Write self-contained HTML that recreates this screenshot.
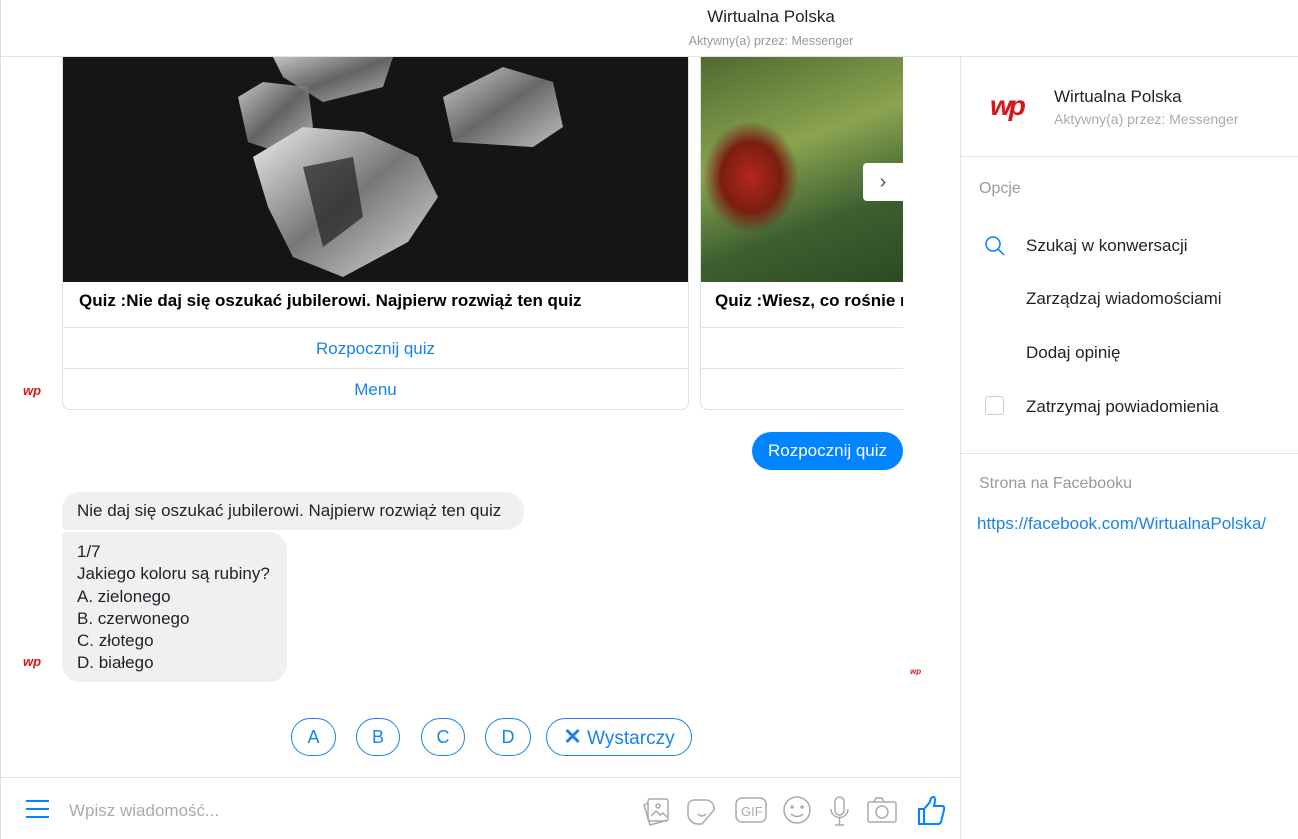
<!DOCTYPE html>
<html><head><meta charset="utf-8"><style>
*{box-sizing:border-box;margin:0;padding:0}
body{width:1298px;height:839px;overflow:hidden;background:#fff;font-family:"Liberation Sans",sans-serif;position:relative;color:#1d2129}
.abs{position:absolute}
</style></head><body>
<div class="abs" style="left:0;top:0;width:1298px;height:57px;border-bottom:1px solid #e4e4e4"></div>
<div class="abs" style="left:0;top:0;width:1px;height:839px;background:#ddd"></div>
<div class="abs" style="left:560px;top:7px;width:422px;text-align:center;font-size:17px">Wirtualna Polska</div>
<div class="abs" style="left:560px;top:34px;width:422px;text-align:center;font-size:12.5px;color:#999">Aktywny(a) przez: Messenger</div>
<div class="abs" style="left:960px;top:57px;width:1px;height:782px;background:#e4e4e4"></div>

<!-- card 1 -->
<div class="abs" style="left:62px;top:57px;width:627px;height:353px;border:1px solid #e0e0e0;border-top:none;border-radius:0 0 8px 8px;overflow:hidden">
 <svg width="627" height="225" style="display:block;background:#151515">
  <defs><linearGradient id="g" x1="0" y1="0" x2="1" y2="1"><stop offset="0" stop-color="#eee"/><stop offset=".5" stop-color="#777"/><stop offset="1" stop-color="#ddd"/></linearGradient></defs>
  <polygon points="175,40 200,25 245,30 250,70 215,95 185,85" fill="url(#g)" opacity=".8"/>
  <polygon points="210,0 330,0 320,30 260,45 220,20" fill="url(#g)" opacity=".8"/>
  <polygon points="380,40 440,10 490,25 500,70 470,90 390,85" fill="url(#g)" opacity=".85"/>
  <polygon points="190,100 240,70 300,75 355,100 375,140 345,185 280,220 230,200 205,150" fill="url(#g)"/>
  <polygon points="240,110 290,100 300,160 260,190" fill="#222" opacity=".7"/>
 </svg>
 <div style="height:46px;border-bottom:1px solid #e4e4e4;padding:9px 16px;font-weight:bold;font-size:17px;color:#000">Quiz :Nie daj się oszukać jubilerowi. Najpierw rozwiąż ten quiz</div>
 <div style="height:41px;border-bottom:1px solid #e4e4e4;text-align:center;line-height:41px;font-size:17px;color:#1a83e8">Rozpocznij quiz</div>
 <div style="height:41px;text-align:center;line-height:41px;font-size:17px;color:#1a83e8">Menu</div>
</div>
<!-- card 2 -->
<div class="abs" style="left:700px;top:57px;width:203px;height:353px;border:1px solid #e0e0e0;border-top:none;border-right:none;border-radius:0 0 0 8px;overflow:hidden">
 <div style="height:225px;background:radial-gradient(ellipse 60px 70px at 50px 120px,#b5261a,#7a1e12 50%,transparent 80%),linear-gradient(160deg,#4f6a30,#8aa450 40%,#3d6030 70%,#2d4a22)"></div>
 <div style="height:46px;border-bottom:1px solid #e4e4e4;padding:9px 14px;font-weight:bold;font-size:17px;color:#000;white-space:nowrap">Quiz :Wiesz, co rośnie r</div>
 <div style="height:41px;border-bottom:1px solid #e4e4e4"></div>
</div>
<div class="abs" style="left:863px;top:163px;width:40px;height:38px;background:#fff;border-radius:4px 0 0 4px;text-align:center;line-height:38px;font-size:20px;color:#555">›</div>

<div class="abs" style="left:23px;top:383px;font-weight:bold;color:#d9161c;font-size:13px;font-style:italic">wp</div>
<div class="abs" style="left:23px;top:654px;font-weight:bold;color:#d9161c;font-size:13px;font-style:italic">wp</div>
<div class="abs" style="left:910px;top:667px;font-weight:bold;color:#d9161c;font-size:8px;font-style:italic">wp</div>

<div class="abs" style="left:752px;top:432px;width:151px;height:38px;background:#0084ff;color:#fff;border-radius:19px;text-align:center;line-height:38px;font-size:17px">Rozpocznij quiz</div>

<div class="abs" style="left:62px;top:492px;width:462px;height:38px;background:#f1f0f0;border-radius:18px 18px 18px 4px;padding:0 15px;line-height:38px;font-size:17px">Nie daj się oszukać jubilerowi. Najpierw rozwiąż ten quiz</div>
<div class="abs" style="left:62px;top:532px;width:225px;height:150px;background:#f1f0f0;border-radius:4px 18px 18px 18px;padding:9px 15px;line-height:22.3px;font-size:17px">1/7<br>Jakiego koloru są rubiny?<br>A. zielonego<br>B. czerwonego<br>C. złotego<br>D. białego</div>

<div class="abs" style="left:291px;top:718px;width:45px;height:38px;border:1px solid #1a83e8;border-radius:19px;text-align:center;line-height:36px;color:#1a83e8;font-size:18px">A</div>
<div class="abs" style="left:356px;top:718px;width:44px;height:38px;border:1px solid #1a83e8;border-radius:19px;text-align:center;line-height:36px;color:#1a83e8;font-size:18px">B</div>
<div class="abs" style="left:421px;top:718px;width:44px;height:38px;border:1px solid #1a83e8;border-radius:19px;text-align:center;line-height:36px;color:#1a83e8;font-size:18px">C</div>
<div class="abs" style="left:485px;top:718px;width:46px;height:38px;border:1px solid #1a83e8;border-radius:19px;text-align:center;line-height:36px;color:#1a83e8;font-size:18px">D</div>
<div class="abs" style="left:546px;top:718px;width:146px;height:38px;border:1px solid #1a83e8;border-radius:19px;text-align:center;line-height:36px;color:#1a83e8;font-size:19px"><b style="font-size:22px">✕</b> Wystarczy</div>

<div class="abs" style="left:0;top:777px;width:960px;height:1px;background:#e4e4e4"></div>
<svg class="abs" style="left:25px;top:799px" width="25" height="20"><path d="M1 2h23M1 10h23M1 18h23" stroke="#0084ff" stroke-width="2"/></svg>
<div class="abs" style="left:69px;top:801px;font-size:17px;color:#aaa">Wpisz wiadomość...</div>
<svg class="abs" style="left:640px;top:794px" width="310" height="34" fill="none" stroke="#aaa" stroke-width="1.5">
 <rect x="8" y="5" width="20" height="22" rx="2"/><path d="M8 9l-4 2 6 20 18-5"/><circle cx="18" cy="12" r="2"/><path d="M11 22l5-5 4 4 3-2 4 4"/>
 <path d="M54 6h12a8 8 0 0 1 8 8v2l-12 14h-4a10 10 0 0 1-10-10v-8a6 6 0 0 1 6-6z"/><path d="M58 20q4 4 8 0"/>
 <rect x="96" y="4" width="30" height="24" rx="6"/><text x="101" y="22" font-family="Liberation Sans" font-size="13" fill="#aaa" stroke="none">GIF</text>
 <circle cx="157" cy="16" r="13"/><circle cx="152" cy="13" r="1" fill="#aaa"/><circle cx="162" cy="13" r="1" fill="#aaa"/><path d="M151 20q6 5 12 0"/>
 <rect x="195" y="3" width="9" height="18" rx="4.5"/><path d="M191 15a8.5 8.5 0 0 0 17 0M199.5 24v7M195 31h9"/>
 <rect x="228" y="8" width="28" height="20" rx="2"/><circle cx="242" cy="18" r="6"/><path d="M234 8l2-4h6l2 4"/>
 <path stroke="#0084ff" stroke-width="2" d="M279 15h5v15h-5z M284 15l6-7q1-6 4-5q2 1 0 9h8q3 0 2 4l-3 12q-1 2-3 2h-14"/>
</svg>

<!-- sidebar -->
<div class="abs" style="left:990px;top:90px;font-weight:bold;font-style:italic;color:#d9161c;font-size:28px;letter-spacing:-3px">wp</div>
<div class="abs" style="left:1054px;top:87px;font-size:17px">Wirtualna Polska</div>
<div class="abs" style="left:1054px;top:111px;font-size:14px;color:#aaa">Aktywny(a) przez: Messenger</div>
<div class="abs" style="left:961px;top:156px;width:337px;height:1px;background:#e4e4e4"></div>
<div class="abs" style="left:979px;top:180px;font-size:16px;color:#999">Opcje</div>
<svg class="abs" style="left:984px;top:235px" width="22" height="22" fill="none" stroke="#0084ff" stroke-width="1.5"><circle cx="9" cy="9" r="7"/><path d="M14 14l6 6"/></svg>
<div class="abs" style="left:1026px;top:236px;font-size:17px">Szukaj w konwersacji</div>
<div class="abs" style="left:1026px;top:289px;font-size:17px">Zarządzaj wiadomościami</div>
<div class="abs" style="left:1026px;top:343px;font-size:17px">Dodaj opinię</div>
<div class="abs" style="left:985px;top:396px;width:19px;height:19px;border:1px solid #ccc;border-radius:3px"></div>
<div class="abs" style="left:1026px;top:397px;font-size:17px">Zatrzymaj powiadomienia</div>
<div class="abs" style="left:961px;top:453px;width:337px;height:1px;background:#e4e4e4"></div>
<div class="abs" style="left:979px;top:475px;font-size:16px;color:#999">Strona na Facebooku</div>
<div class="abs" style="left:977px;top:514px;font-size:17px;color:#1a83e8">https://facebook.com/WirtualnaPolska/</div>
</body></html>
